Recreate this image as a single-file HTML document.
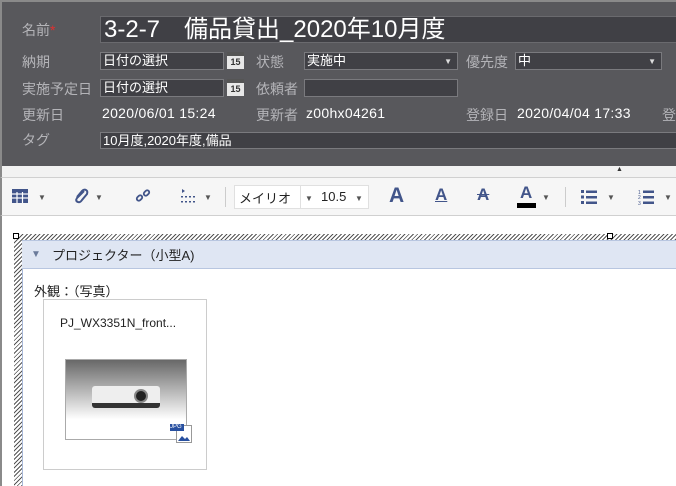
<!DOCTYPE html>
<html><head><meta charset="utf-8"><style>
*{margin:0;padding:0;box-sizing:border-box}
body{width:676px;height:486px;overflow:hidden;background:#fff;font-family:"Liberation Sans","Noto Sans CJK JP",sans-serif;position:relative}
.abs{position:absolute}
#top{left:0;top:0;width:676px;height:166px;background:#58585c;border:2px solid #8a8a8a;border-right:none;border-bottom:none}
.lbl{color:#b4b4b8;font-size:14px}
.val{color:#fff;font-size:14px;letter-spacing:0.3px}
.in{background:#404045;border:1px solid #7a7a7e;color:#fff;font-size:13px;padding-left:2px;line-height:16px}
.cal{width:17px;height:17px;background:#e8e8e8;border-top:4px solid #555;font-size:9px;color:#333;text-align:center;line-height:12px;font-weight:bold}
.dd{color:#ddd;font-size:8px}
.tbg{color:#555;font-size:8px}
</style></head><body>
<div id="top" class="abs"></div>
<div class="abs lbl" style="left:22px;top:20px;font-size:14px">名前<span style="color:#e03030">*</span></div>
<div class="abs" style="left:100px;top:16px;width:576px;height:27px;background:#404045;border:1px solid #6a6a6e;border-right:none;color:#fff;font-size:24px;line-height:25px;padding-left:3px">3-2-7　備品貸出_2020年10月度</div>
<div class="abs lbl" style="left:22px;top:52px">納期</div>
<div class="abs in" style="left:100px;top:52px;width:124px;height:18px">日付の選択</div>
<div class="abs cal" style="left:227px;top:52px">15</div>
<div class="abs lbl" style="left:256px;top:52px">状態</div>
<div class="abs in" style="left:304px;top:52px;width:154px;height:18px">実施中<span class="abs dd" style="right:5px;top:1px">▼</span></div>
<div class="abs lbl" style="left:466px;top:52px">優先度</div>
<div class="abs in" style="left:515px;top:52px;width:147px;height:18px">中<span class="abs dd" style="right:5px;top:1px">▼</span></div>
<div class="abs lbl" style="left:22px;top:79px">実施予定日</div>
<div class="abs in" style="left:100px;top:79px;width:124px;height:18px">日付の選択</div>
<div class="abs cal" style="left:227px;top:79px">15</div>
<div class="abs lbl" style="left:256px;top:79px">依頼者</div>
<div class="abs in" style="left:304px;top:79px;width:154px;height:18px"></div>
<div class="abs lbl" style="left:22px;top:105px">更新日</div>
<div class="abs val" style="left:102px;top:105px">2020/06/01 15:24</div>
<div class="abs lbl" style="left:256px;top:105px">更新者</div>
<div class="abs val" style="left:306px;top:105px">z00hx04261</div>
<div class="abs lbl" style="left:466px;top:105px">登録日</div>
<div class="abs val" style="left:517px;top:105px">2020/04/04 17:33</div>
<div class="abs lbl" style="left:662px;top:105px">登</div>
<div class="abs lbl" style="left:22px;top:130px">タグ</div>
<div class="abs in" style="left:100px;top:132px;width:576px;height:17px;border-right:none">10月度,2020年度,備品</div>
<div class="abs" style="left:0;top:166px;width:676px;height:12px;background:#f2f2f2;border-left:2px solid #8a8a8a;border-bottom:1px solid #d0d0d0"><span class="abs" style="left:614px;top:0;font-size:7px;color:#333">▲</span></div>
<div class="abs" style="left:0;top:178px;width:676px;height:38px;background:#f6f6f6;border-left:2px solid #8a8a8a;border-bottom:1px solid #d0d0d0"></div>
<svg class="abs" style="left:11px;top:188px" width="18" height="16"><rect x="1" y="1" width="16" height="14" fill="#42558a"/><g stroke="#fff" stroke-width="1.2"><line x1="1" y1="6" x2="17" y2="6"/><line x1="1" y1="10" x2="17" y2="10"/><line x1="6" y1="4" x2="6" y2="15"/><line x1="11.5" y1="4" x2="11.5" y2="15"/></g></svg>
<span class="abs tbg" style="left:38px;top:193px">▼</span>
<svg class="abs" style="left:72px;top:187px" width="18" height="18"><path d="M12 4 L5 11 Q3 14 6 15 Q8 16 10 13 L15 7 Q16 4 14 3 Q12 2 10 4 L5 10" fill="none" stroke="#42558a" stroke-width="2"/></svg>
<span class="abs tbg" style="left:95px;top:193px">▼</span>
<svg class="abs" style="left:135px;top:188px" width="16" height="16"><rect x="1.5" y="8" width="6" height="4" rx="2" transform="rotate(-45 4.5 10)" fill="none" stroke="#42558a" stroke-width="1.8"/><rect x="8.5" y="3" width="6" height="4" rx="2" transform="rotate(-45 11.5 5)" fill="none" stroke="#42558a" stroke-width="1.8"/></svg>
<svg class="abs" style="left:178px;top:187px" width="22" height="18"><path d="M4 2 L7 4 L4 6Z" fill="#42558a"/><g fill="#42558a"><rect x="3" y="9" width="2" height="1.5"/><rect x="7" y="9" width="2" height="1.5"/><rect x="11" y="9" width="2" height="1.5"/><rect x="15" y="9" width="2" height="1.5"/><rect x="3" y="14" width="2" height="1.5"/><rect x="7" y="14" width="2" height="1.5"/><rect x="11" y="14" width="2" height="1.5"/><rect x="15" y="14" width="2" height="1.5"/></g></svg>
<span class="abs tbg" style="left:204px;top:193px">▼</span>
<div class="abs" style="left:225px;top:187px;width:1px;height:20px;background:#ccc"></div>
<div class="abs" style="left:234px;top:185px;width:135px;height:24px;background:#fff;border:1px solid #e0e0e0"></div>
<div class="abs" style="left:300px;top:186px;width:1px;height:22px;background:#e0e0e0"></div>
<span class="abs" style="left:239px;top:188px;font-size:13px;color:#222">メイリオ</span>
<span class="abs tbg" style="left:305px;top:194px">▼</span>
<span class="abs" style="left:321px;top:189px;font-size:13px;color:#222">10.5</span>
<span class="abs tbg" style="left:355px;top:194px">▼</span>
<span class="abs" style="left:389px;top:184px;font-size:21px;font-weight:bold;color:#42558a">A</span>
<span class="abs" style="left:435px;top:185px;font-size:17px;font-weight:bold;color:#42558a;text-decoration:underline">A</span>
<span class="abs" style="left:477px;top:185px;font-size:17px;font-weight:bold;color:#42558a;text-decoration:line-through">A</span>
<span class="abs" style="left:520px;top:183px;font-size:17px;font-weight:bold;color:#42558a">A</span>
<div class="abs" style="left:517px;top:203px;width:19px;height:5px;background:#000"></div>
<span class="abs tbg" style="left:542px;top:193px">▼</span>
<div class="abs" style="left:565px;top:187px;width:1px;height:20px;background:#ccc"></div>
<svg class="abs" style="left:581px;top:189px" width="20" height="16"><g fill="#42558a"><rect x="0" y="1" width="3" height="3"/><rect x="0" y="6.5" width="3" height="3"/><rect x="0" y="12" width="3" height="3"/><rect x="5" y="1.5" width="11" height="2.5"/><rect x="5" y="7" width="11" height="2.5"/><rect x="5" y="12.5" width="11" height="2.5"/></g></svg>
<span class="abs tbg" style="left:607px;top:193px">▼</span>
<svg class="abs" style="left:638px;top:188px" width="20" height="18"><g fill="#42558a"><rect x="5" y="2.5" width="11" height="2.5"/><rect x="5" y="8" width="11" height="2.5"/><rect x="5" y="13.5" width="11" height="2.5"/></g><text x="0" y="6" font-size="5" fill="#42558a">1</text><text x="0" y="11" font-size="5" fill="#42558a">2</text><text x="0" y="17" font-size="5" fill="#42558a">3</text></svg>
<span class="abs tbg" style="left:664px;top:193px">▼</span>
<div class="abs" style="left:0;top:216px;width:2px;height:270px;background:#8a8a8a"></div>
<div class="abs" style="left:14px;top:234px;width:662px;height:6px;background:repeating-linear-gradient(135deg,#555 0 1px,#fff 1px 3px)"></div>
<div class="abs" style="left:14px;top:234px;width:8px;height:252px;background:repeating-linear-gradient(135deg,#555 0 1px,#fff 1px 3px)"></div>
<div class="abs" style="left:13px;top:233px;width:6px;height:6px;border:1px solid #000;background:#fff"></div>
<div class="abs" style="left:607px;top:233px;width:6px;height:6px;border:1px solid #000;background:#fff"></div>
<div class="abs" style="left:22px;top:240px;width:1px;height:246px;background:#a8b8d8"></div>
<div class="abs" style="left:22px;top:240px;width:654px;height:29px;background:#dfe6f3;border-top:1px solid #b8c6e0;border-bottom:1px solid #b8c6e0"></div>
<span class="abs" style="left:31px;top:249px;font-size:10px;color:#6a7a9a">▼</span>
<span class="abs" style="left:52px;top:245px;font-size:13px;color:#222">プロジェクター（小型A)</span>
<span class="abs" style="left:34px;top:281px;font-size:13px;color:#222">外観：（写真）</span>
<div class="abs" style="left:43px;top:299px;width:164px;height:171px;border:1px solid #ccc;background:#fff"></div>
<span class="abs" style="left:60px;top:316px;font-size:12px;color:#222">PJ_WX3351N_front...</span>
<div class="abs" style="left:65px;top:359px;width:122px;height:81px;border:1px solid #aaa;background:linear-gradient(#686868,#fff 75%)"></div>
<div class="abs" style="left:92px;top:386px;width:68px;height:22px;background:#eee;border-radius:3px;border-bottom:5px solid #333"></div>
<div class="abs" style="left:134px;top:389px;width:14px;height:14px;border-radius:50%;background:#222;border:2px solid #888"></div>
<div class="abs" style="left:176px;top:425px;width:16px;height:18px;background:#fff;border:1px solid #999"></div>
<div class="abs" style="left:170px;top:424px;width:14px;height:7px;background:#2850a0;color:#fff;font-size:6px;line-height:7px">JPG</div>
<svg class="abs" style="left:178px;top:434px" width="12" height="7"><path d="M0 7 L4 2 L7 5 L9 3 L12 7Z" fill="#2850a0"/></svg>
</body></html>
